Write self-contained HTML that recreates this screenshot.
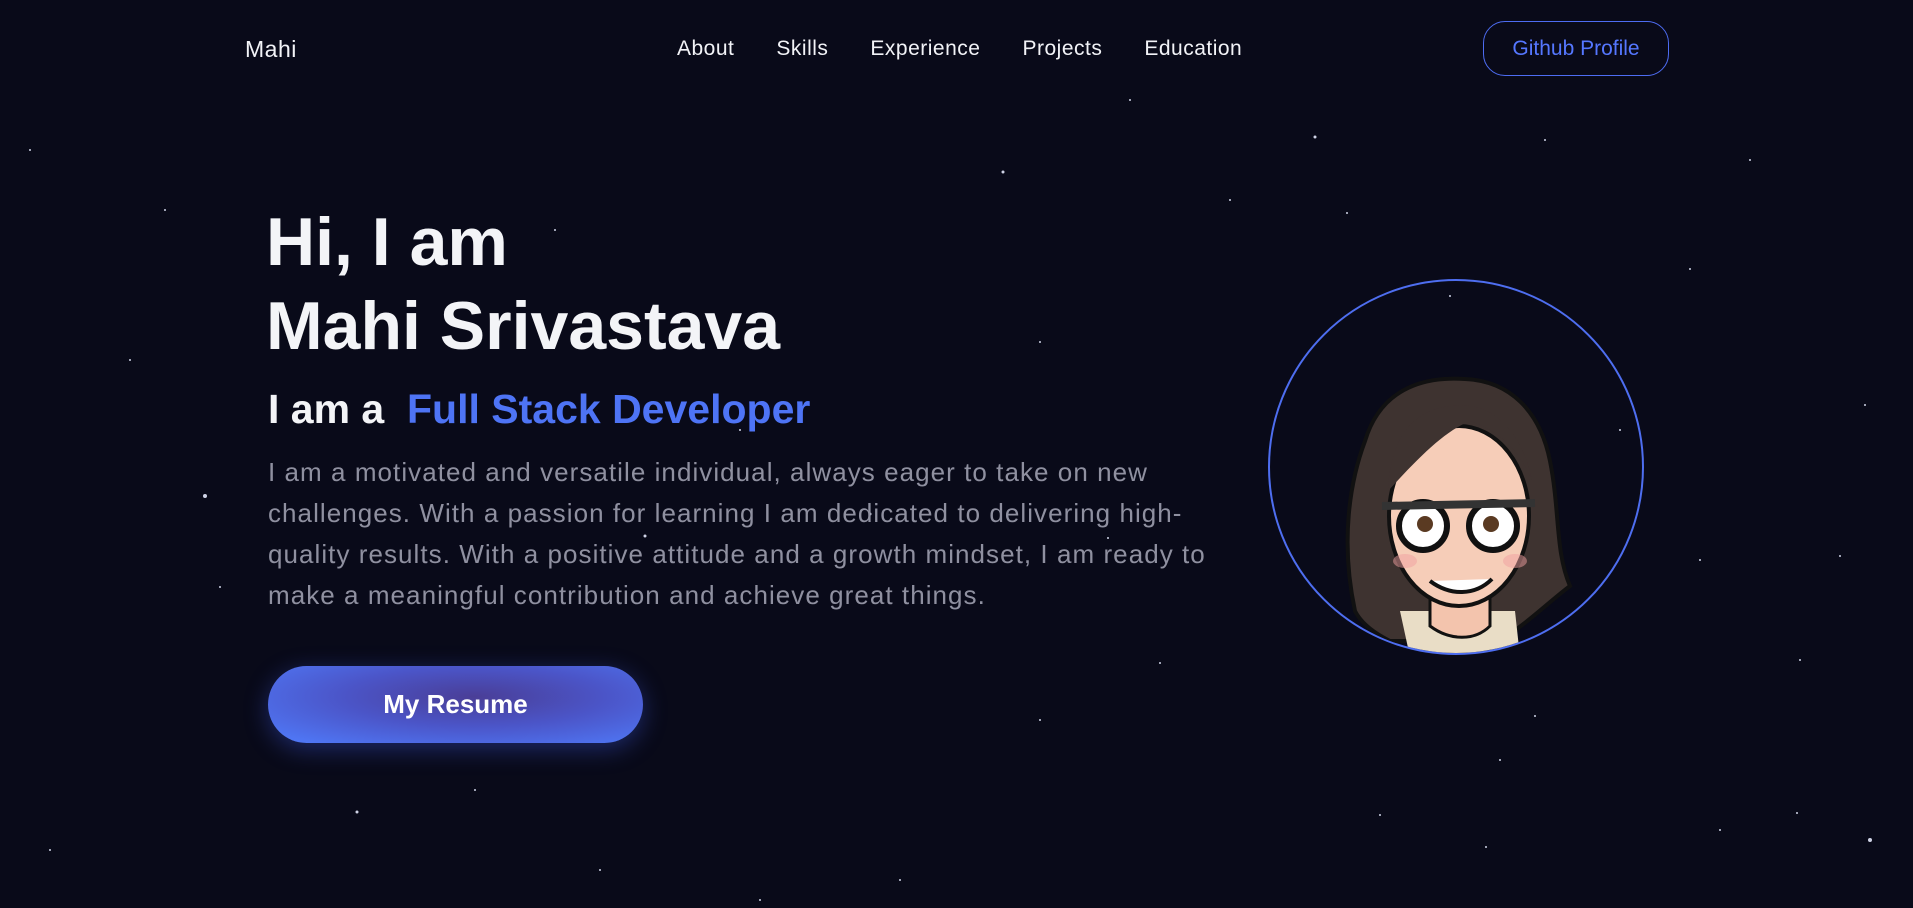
<!DOCTYPE html>
<html><head><meta charset="utf-8">
<style>
*{margin:0;padding:0;box-sizing:border-box}
html,body{width:1913px;height:908px;overflow:hidden;background:#090a19;font-family:"Liberation Sans",sans-serif}
.stars{position:absolute;left:0;top:0}
.logo{position:absolute;left:245px;top:36px;color:#f2f3f7;font-size:23px;letter-spacing:.5px}
.nav{position:absolute;top:37px;left:677px;display:flex;gap:42px;color:#f2f3f7;font-size:21px;letter-spacing:.5px}
.gh{position:absolute;left:1483px;top:21px;width:186px;height:55px;border:1.5px solid #4d6cf2;border-radius:22px;color:#5577ff;font-size:21px;display:flex;align-items:center;justify-content:center}
h1{position:absolute;left:266px;top:200px;color:#f3f4f7;font-size:68px;font-weight:bold;line-height:84px}
.sub{position:absolute;left:268px;top:386px;font-size:41px;font-weight:bold;color:#f3f4f7;white-space:nowrap}
.sub span{color:#4e74f5}
.p{position:absolute;left:268px;top:452px;font-size:26px;letter-spacing:1.05px;line-height:41px;color:#8f90a0;white-space:nowrap}
.btn{position:absolute;left:268px;top:666px;width:375px;height:77px;border-radius:40px;background:radial-gradient(ellipse at 55% 40%,#4a3e97 0%,#4b55c8 45%,#4f76f4 90%);box-shadow:0 6px 24px rgba(70,100,255,.35);color:#fff;font-size:26px;font-weight:bold;display:flex;align-items:center;justify-content:center}
.circ{position:absolute;left:1268px;top:279px;width:376px;height:376px;border:2px solid #4e6ef0;border-radius:50%;overflow:hidden}
</style></head><body>
<svg class="stars" width="1913" height="908">
<g fill="#cfd3e6">
<circle cx="1315" cy="137" r="1.5"/><circle cx="1003" cy="172" r="1.5"/><circle cx="205" cy="496" r="2"/><circle cx="645" cy="536" r="1.5"/><circle cx="1347" cy="213" r="1"/><circle cx="1450" cy="296" r="1"/><circle cx="870" cy="514" r="1.5"/><circle cx="1040" cy="342" r="1"/><circle cx="1800" cy="660" r="1"/><circle cx="1870" cy="840" r="2"/><circle cx="1797" cy="813" r="1"/><circle cx="1486" cy="847" r="1"/><circle cx="357" cy="812" r="1.5"/><circle cx="220" cy="587" r="1"/><circle cx="1535" cy="716" r="1"/><circle cx="1690" cy="269" r="1"/><circle cx="1840" cy="556" r="1"/><circle cx="1160" cy="663" r="1"/><circle cx="1380" cy="815" r="1"/><circle cx="50" cy="850" r="1"/><circle cx="130" cy="360" r="1"/><circle cx="475" cy="790" r="1"/><circle cx="1040" cy="720" r="1"/><circle cx="1108" cy="538" r="1"/><circle cx="1750" cy="160" r="1"/><circle cx="1865" cy="405" r="1"/><circle cx="555" cy="230" r="1"/><circle cx="740" cy="430" r="1"/><circle cx="1230" cy="200" r="1"/><circle cx="30" cy="150" r="1"/><circle cx="1620" cy="430" r="1"/><circle cx="1720" cy="830" r="1"/><circle cx="600" cy="870" r="1"/><circle cx="900" cy="880" r="1"/><circle cx="165" cy="210" r="1"/><circle cx="1130" cy="100" r="1"/><circle cx="1545" cy="140" r="1"/><circle cx="1700" cy="560" r="1"/><circle cx="1500" cy="760" r="1"/><circle cx="760" cy="900" r="1"/>
</g></svg>
<div class="logo">Mahi</div>
<div class="nav"><span>About</span><span>Skills</span><span>Experience</span><span>Projects</span><span>Education</span></div>
<div class="gh">Github Profile</div>
<h1>Hi, I am<br>Mahi Srivastava</h1>
<div class="sub">I am a&nbsp; <span>Full Stack Developer</span></div>
<div class="p">I am a motivated and versatile individual, always eager to take on new<br>challenges. With a passion for learning I am dedicated to delivering high-<br>quality results. With a positive attitude and a growth mindset, I am ready to<br>make a meaningful contribution and achieve great things.</div>
<div class="btn">My Resume</div>
<div class="circ">
<svg width="376" height="376" viewBox="0 0 376 376">
<path d="M85 330 C70 260 80 200 95 160 C110 110 150 95 195 98 C240 100 270 130 280 180 C290 230 285 270 300 305 C280 320 260 340 230 360 L120 360 C100 350 90 340 85 330Z" fill="#3e3330" stroke="#111" stroke-width="4"/>
<path d="M130 330 L140 376 L250 376 L245 330Z" fill="#e9ddc6"/>
<path d="M160 300 L160 345 C180 360 205 360 220 345 L220 300Z" fill="#f3c4ad" stroke="#111" stroke-width="3"/>
<ellipse cx="189" cy="235" rx="70" ry="90" fill="#f6cdb8" stroke="#111" stroke-width="4"/>
<path d="M118 210 C120 150 150 120 200 125 C230 128 255 160 262 200 C250 170 230 150 200 140 C175 150 150 175 118 210Z" fill="#3e3330"/>
<circle cx="153" cy="245" r="24" fill="#fff" stroke="#111" stroke-width="6"/>
<circle cx="223" cy="245" r="24" fill="#fff" stroke="#111" stroke-width="6"/>
<path d="M112 225 L265 222" stroke="#333" stroke-width="8"/>
<circle cx="155" cy="243" r="8" fill="#5a3a22"/><circle cx="221" cy="243" r="8" fill="#5a3a22"/>
<path d="M160 300 C180 315 205 315 222 298" stroke="#111" stroke-width="4" fill="#fff"/>
<ellipse cx="135" cy="280" rx="12" ry="7" fill="#f0a0a0" opacity=".5"/><ellipse cx="245" cy="280" rx="12" ry="7" fill="#f0a0a0" opacity=".5"/>
</svg>
</div>
</body></html>
